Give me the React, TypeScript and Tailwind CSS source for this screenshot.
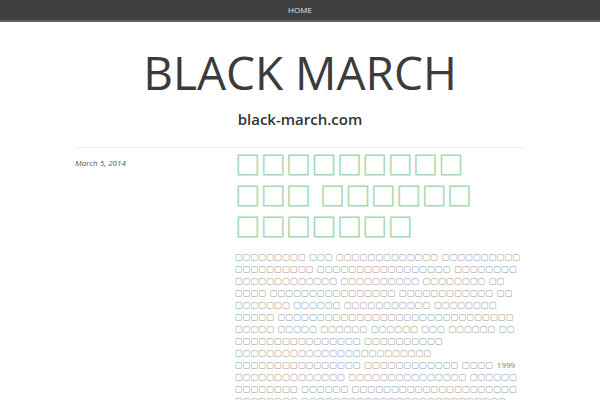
const box = (n: number, glyph: string) => glyph.repeat(n);

const titleWords = [9, 3, 6, 7].map((n) => box(n, "□")).join(" ");

// word lengths of each rendered line of the first paragraph
const bodyLines: number[][] = [
  [9, 3, 13, 10],
  [10, 17, 8],
  [13, 10, 8, 2],
  [4, 16, 12, 2],
  [7, 6, 11, 8],
  [5, 30],
  [5, 5, 6, 6, 3, 6, 2],
  [16, 10],
  [25],
  [16, 12, 4],
  [14, 15, 6],
  [8, 6, 21],
  [8, 26],
];

export default function App() {
  return (
    <div className="h-[400px] overflow-hidden bg-white font-['Open_Sans',sans-serif] text-[#3d3d3d]">
      <nav className="flex h-[22px] items-center justify-center border-b-2 border-[#5f5f5f] bg-[#404040]">
        <a className="text-[8px] uppercase text-[#e6e6e6]">Home</a>
      </nav>

      <header className="flex flex-col items-center">
        <h1 className="mt-[22px] text-[46px] font-normal leading-[56px] text-[#3b3b3b]">
          BLACK MARCH
        </h1>
        <p className="mt-[9px] text-[15px] font-semibold leading-[20px] text-[#333]">
          black-march.com
        </p>
      </header>

      <main className="mx-[75px] mt-[18px] border-t border-[#ececec]">
        <div className="flex pt-[9px]">
          <div className="w-[160px] shrink-0">
            <p className="text-[8px] italic leading-[12px] text-[#555]">March 5, 2014</p>
          </div>
          <article className="w-[290px]">
            <h2 className="-mt-[10px] font-['DejaVu_Sans',sans-serif] text-[26.9px] leading-[31px] text-[#a8d9b4]">
              {titleWords}
            </h2>
            <p className="mt-[11px] w-[300px] font-['DejaVu_Sans',sans-serif] text-[8.34px] leading-[12px] [word-spacing:0.7px] text-[#979797]">
              {bodyLines.map((line, i) => (
                <span key={i}>
                  {line.map((n) => box(n, "▢")).join(" ")}
                  {i === 9 && (
                    <>
                      {" "}
                      <span className="font-['Open_Sans',sans-serif] text-[8px] text-[#777]">1999</span>
                    </>
                  )}
                  {i < bodyLines.length - 1 && <br />}
                </span>
              ))}
            </p>
          </article>
        </div>
      </main>
    </div>
  );
}
